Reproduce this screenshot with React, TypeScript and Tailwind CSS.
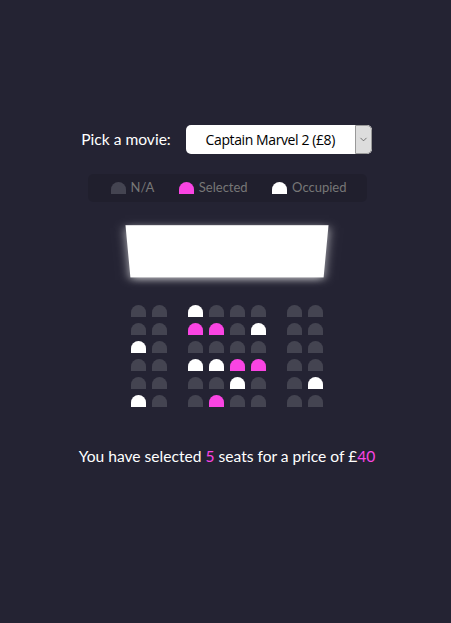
import { ChevronDown } from "lucide-react";

type SeatState = "na" | "sel" | "occ";

// rows of 8 seats: n = free, s = selected, o = occupied
const rows: string[] = [
  "nnonnnnn",
  "nnssnonn",
  "onnnnnnn",
  "nnoossnn",
  "nnnnonno",
  "onnsnnnn",
];

const seatColor: Record<SeatState, string> = {
  na: "bg-[#444451]",
  sel: "bg-[#fa44e3]",
  occ: "bg-white",
};

function Seat({ state, gap = false }: { state: SeatState; gap?: boolean }) {
  return (
    <div
      className={`h-[12px] w-[15px] rounded-t-[10px] ml-[3px] my-[3px] ${
        gap ? "mr-[18px]" : "mr-[3px]"
      } ${seatColor[state]}`}
    />
  );
}

const toState = (c: string): SeatState =>
  c === "s" ? "sel" : c === "o" ? "occ" : "na";

export default function App() {
  const selected = rows.join("").split("").filter((c) => c === "s").length;
  const price = 8;

  return (
    <div
      className="min-h-screen bg-[#242333] text-white flex flex-col items-center pt-[125px]"
      style={{ fontFamily: "Lato, 'Noto Sans', sans-serif" }}
    >
      <div className="flex items-center h-[29px] pl-[2px]">
        <label className="text-[15.6px]">Pick a movie:</label>
        <div className="ml-[15px] flex h-[29px] w-[186px] rounded-[5px] bg-white overflow-hidden">
          <div className="flex-1 flex items-center justify-center text-[14px] text-black font-['Open_Sans',sans-serif] tracking-[-0.4px]">
            Captain Marvel 2 (£8)
          </div>
          <div className="w-[17px] flex items-center justify-center bg-[#dddddd] border border-[#999] rounded-r-[5px] text-[#444]">
            <ChevronDown size={11} strokeWidth={1.5} />
          </div>
        </div>
      </div>

      <ul className="mt-[20px] flex items-center justify-between h-[28px] w-[279px] px-[10px] rounded-[5px] bg-black/10 text-[#777] ml-[3px]">
        <li className="flex items-center mx-[10px]">
          <Seat state="na" />
          <small className="ml-[2px] text-[13px]">N/A</small>
        </li>
        <li className="flex items-center mx-[10px]">
          <Seat state="sel" />
          <small className="ml-[2px] text-[13px]">Selected</small>
        </li>
        <li className="flex items-center mx-[10px]">
          <Seat state="occ" />
          <small className="ml-[2px] text-[13px]">Occupied</small>
        </li>
      </ul>

      <div className="perspective-[1000px] w-[198px] ml-[3px]">
        <div className="bg-white h-[70px] w-full my-[15px] -rotate-x-45 shadow-[0_3px_10px_rgba(255,255,255,0.7)]" />
        {rows.map((row, r) => (
          <div key={r} className="flex">
            {row.split("").map((c, i) => (
              <Seat key={i} state={toState(c)} gap={i === 1 || i === 5} />
            ))}
          </div>
        ))}
      </div>

      <p className="mt-[35px] text-[15.6px] pl-[3px]">
        You have selected <span className="text-[#fa44e3]">{selected}</span>{" "}
        seats for a price of £
        <span className="text-[#fa44e3]">{selected * price}</span>
      </p>
    </div>
  );
}
